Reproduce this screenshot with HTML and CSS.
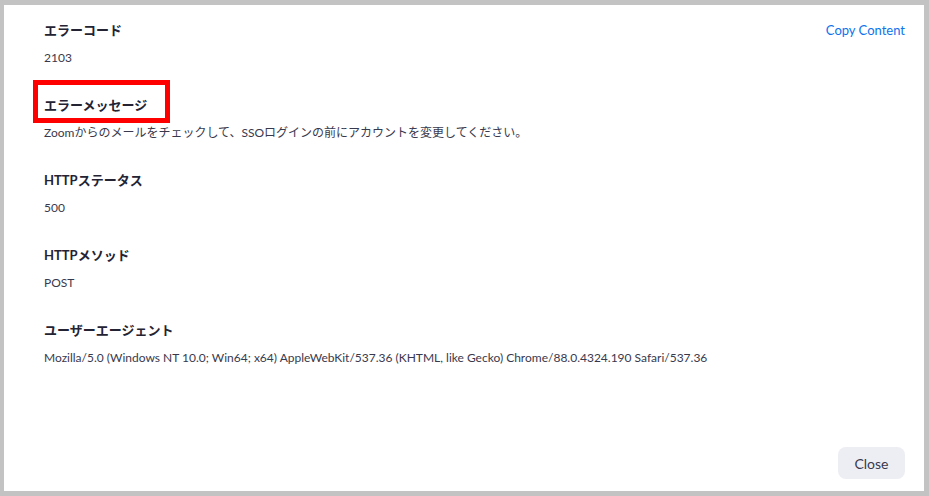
FILE: index.html
```html
<!DOCTYPE html>
<html lang="ja">
<head>
<meta charset="utf-8">
<link rel="stylesheet" href="styles.css">
</head>
<body>
<div class="dialog">
  <div class="content">
    <div class="fields">
      <section class="field">
        <h3 class="label">エラーコード</h3>
        <p class="value">2103</p>
      </section>
      <section class="field">
        <h3 class="label highlighted">エラーメッセージ</h3>
        <p class="value">Zoomからのメールをチェックして、SSOログインの前にアカウントを変更してください。</p>
      </section>
      <section class="field">
        <h3 class="label">HTTPステータス</h3>
        <p class="value">500</p>
      </section>
      <section class="field">
        <h3 class="label">HTTPメソッド</h3>
        <p class="value">POST</p>
      </section>
      <section class="field">
        <h3 class="label">ユーザーエージェント</h3>
        <p class="value">Mozilla/5.0 (Windows NT 10.0; Win64; x64) AppleWebKit/537.36 (KHTML, like Gecko) Chrome/88.0.4324.190 Safari/537.36</p>
      </section>
    </div>
    <a class="copy" href="#">Copy Content</a>
  </div>
  <div class="footer">
    <button class="close">Close</button>
  </div>
</div>
</body>
</html>
```
FILE: styles.css
```css
html, body {
  margin: 0;
  padding: 0;
}
body {
  background: #c3c3c3;
  width: 929px;
  height: 496px;
  padding: 5px 5px 5px 4px;
  box-sizing: border-box;
  font-family: Lato, "Noto Sans CJK JP", sans-serif;
}
.dialog {
  background: #ffffff;
  height: 100%;
  display: flex;
  flex-direction: column;
  box-sizing: border-box;
  padding: 0 19px 12px 40px;
}
.content {
  flex: 1;
  display: flex;
  justify-content: space-between;
  align-items: flex-start;
}
.fields {
  display: flex;
  flex-direction: column;
  gap: 29px;
  padding-top: 16px;
}
.field {
  display: flex;
  flex-direction: column;
}
.label {
  margin: 0;
  font-size: 13px;
  font-weight: 700;
  line-height: 18px;
  color: #232333;
  height: 18px;
}
.highlighted {
  outline: 5px solid #ff0000;
  outline-offset: 0;
  align-self: flex-start;
  height: auto;
  margin: -11px 0 -4px -6px;
  padding: 11px 18px 4px 6px;
}
.value {
  margin: 10px 0 0;
  font-size: 12px;
  line-height: 18px;
  color: #39394d;
}
.copy {
  margin-top: 17px;
  font-size: 13px;
  line-height: 16px;
  color: #0e72ed;
  text-decoration: none;
}
.footer {
  display: flex;
  justify-content: flex-end;
}
.close {
  width: 67px;
  height: 32px;
  border: none;
  border-radius: 8px;
  background: #ededf4;
  color: #39394d;
  font-family: Lato, "Noto Sans CJK JP", sans-serif;
  font-size: 14px;
  padding: 0;
}
```
